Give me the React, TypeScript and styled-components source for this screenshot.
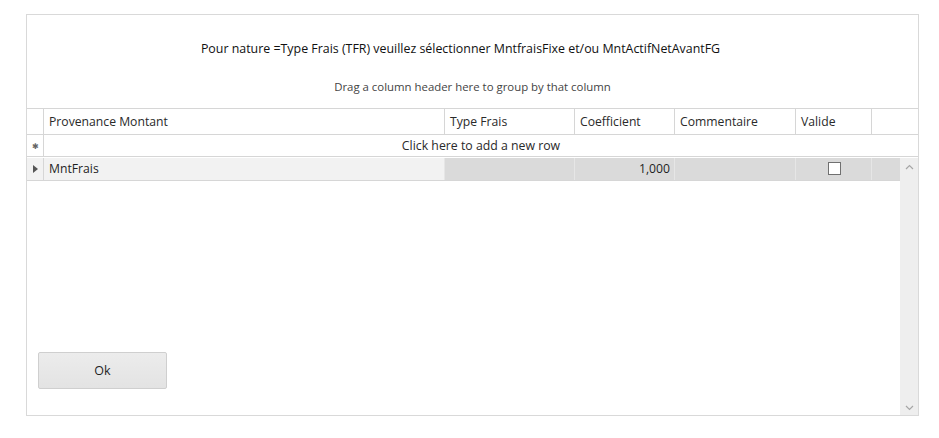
import React from "react";
import styled, { createGlobalStyle } from "styled-components";

const GlobalStyle = createGlobalStyle`
  body {
    margin: 0;
    background: #ffffff;
    font-family: "Open Sans", "Noto Sans", sans-serif;
    color: #1f1f1f;
  }
`;

const Page = styled.div`
  padding: 14px 20px 0 26px;
  width: 939px;
  height: 438px;
  box-sizing: border-box;
`;

const Panel = styled.div`
  width: 893px;
  height: 402px;
  box-sizing: border-box;
  border: 1px solid #d9d9d9;
  display: flex;
  flex-direction: column;
`;

const TitleArea = styled.div`
  height: 93px;
  display: flex;
  flex-direction: column;
  align-items: center;
`;

const Title = styled.div`
  margin: 25px 24px 0 0;
  font-size: 12.4px;
  color: #111;
`;

const GroupHint = styled.div`
  margin-top: 22px;
  font-size: 11.4px;
  color: #444;
`;

const COLS = "17px 401px 130px 100px 121px 76px 1fr";

const HeaderRow = styled.div`
  display: grid;
  grid-template-columns: ${COLS};
  height: 25px;
  border-top: 1px solid #d6d6d6;
  border-bottom: 1px solid #d6d6d6;
  box-sizing: content-box;
`;

const HeaderCell = styled.div`
  border-right: 1px solid #d6d6d6;
  font-size: 12.2px;
  color: #2a2a2a;
  padding-left: 5px;
  display: flex;
  align-items: center;
  &:last-child {
    border-right: none;
  }
`;

const NewRow = styled.div`
  display: grid;
  grid-template-columns: 17px 1fr;
  height: 21px;
  border-bottom: 1px solid #d6d6d6;
`;

const Indicator = styled.div<{ $shade?: boolean }>`
  border-right: 1px solid #d6d6d6;
  background: ${(p) => (p.$shade ? "#f2f2f2" : "#ffffff")};
  display: flex;
  align-items: center;
  justify-content: center;
  color: #666;
  font-size: 8px;
`;

const NewRowText = styled.div`
  display: flex;
  align-items: center;
  justify-content: center;
  font-size: 12.3px;
  color: #2a2a2a;
`;

const Body = styled.div`
  flex: 1;
  display: flex;
  padding-top: 1px;
`;

const RowsArea = styled.div`
  flex: 1;
  display: flex;
  flex-direction: column;
`;

const DataRow = styled.div`
  display: grid;
  grid-template-columns: ${COLS};
  height: 22px;
  border-bottom: 1px solid #d6d6d6;
`;

const DataCell = styled.div<{ $light?: boolean; $right?: boolean; $center?: boolean }>`
  background: ${(p) => (p.$light ? "#f2f2f2" : "#dadada")};
  border-right: 1px solid #e6e6e6;
  font-size: 12.2px;
  color: #1f1f1f;
  display: flex;
  align-items: center;
  justify-content: ${(p) => (p.$right ? "flex-end" : p.$center ? "center" : "flex-start")};
  padding: 0 4px 1px 5px;
  &:last-child {
    border-right: none;
  }
`;

const CheckBox = styled.div`
  width: 13px;
  height: 13px;
  box-sizing: border-box;
  border: 1px solid #707070;
  background: #ffffff;
`;

const Spacer = styled.div`
  flex: 1;
`;

const OkButton = styled.button`
  margin: 0 0 26px 11px;
  width: 129px;
  height: 37px;
  border: 1px solid #cfcfcf;
  border-radius: 2px;
  background: linear-gradient(#ececec, #e3e3e3);
  font-family: "Open Sans", "Noto Sans", sans-serif;
  font-size: 12.5px;
  color: #1f1f1f;
`;

const ScrollBar = styled.div`
  width: 18px;
  background: #eeeeee;
  display: flex;
  flex-direction: column;
  justify-content: space-between;
  align-items: center;
  padding: 6px 0 4px;
`;

const Arrow = ({ up }: { up?: boolean }) => (
  <svg width="9" height="6" viewBox="0 0 9 6">
    <path
      d={up ? "M1 5 L4.5 1.5 L8 5" : "M1 1 L4.5 4.5 L8 1"}
      fill="none"
      stroke="#a6a6a6"
      strokeWidth="1.2"
    />
  </svg>
);

const App = () => {
  return (
    <Page>
      <GlobalStyle />
      <Panel>
        <TitleArea>
          <Title>
            Pour nature =Type Frais (TFR) veuillez sélectionner MntfraisFixe et/ou MntActifNetAvantFG
          </Title>
          <GroupHint>Drag a column header here to group by that column</GroupHint>
        </TitleArea>
        <HeaderRow>
          <HeaderCell />
          <HeaderCell>Provenance Montant</HeaderCell>
          <HeaderCell>Type Frais</HeaderCell>
          <HeaderCell>Coefficient</HeaderCell>
          <HeaderCell>Commentaire</HeaderCell>
          <HeaderCell>Valide</HeaderCell>
          <HeaderCell />
        </HeaderRow>
        <NewRow>
          <Indicator>✱</Indicator>
          <NewRowText>Click here to add a new row</NewRowText>
        </NewRow>
        <Body>
          <RowsArea>
            <DataRow>
              <Indicator $shade>
                <svg width="5" height="8" viewBox="0 0 5 8">
                  <path d="M0 0 L5 4 L0 8 Z" fill="#555" />
                </svg>
              </Indicator>
              <DataCell $light>MntFrais</DataCell>
              <DataCell />
              <DataCell $right>1,000</DataCell>
              <DataCell />
              <DataCell $center>
                <CheckBox />
              </DataCell>
              <DataCell />
            </DataRow>
            <Spacer />
            <OkButton>Ok</OkButton>
          </RowsArea>
          <ScrollBar>
            <Arrow up />
            <Arrow />
          </ScrollBar>
        </Body>
      </Panel>
    </Page>
  );
};

export default App;
